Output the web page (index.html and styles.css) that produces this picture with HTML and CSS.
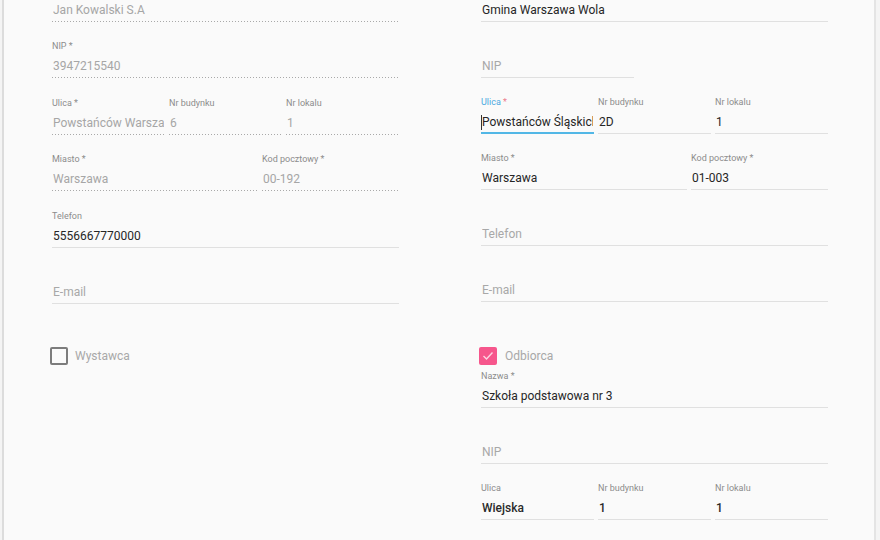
FILE: index.html
```html
<!DOCTYPE html>
<html lang="pl">
<head>
<meta charset="utf-8">
<title>Dane kontrahentów</title>
<link rel="stylesheet" href="styles.css">
</head>
<body>
<div class="card">
  <div class="form">
    <div class="col col-left">
      <div class="field dis"><span class="lbl"></span><input class="inp" disabled value="Jan Kowalski S.A"></div>
      <div class="field dis"><span class="lbl">NIP *</span><input class="inp" disabled value="3947215540"></div>
      <div class="row addr">
        <div class="field dis"><span class="lbl">Ulica *</span><input class="inp" disabled value="Powstańców Warszawy"></div>
        <div class="field dis"><span class="lbl">Nr budynku</span><input class="inp" disabled value="6"></div>
        <div class="field dis"><span class="lbl">Nr lokalu</span><input class="inp" disabled value="1"></div>
      </div>
      <div class="row city">
        <div class="field dis"><span class="lbl">Miasto *</span><input class="inp" disabled value="Warszawa"></div>
        <div class="field dis"><span class="lbl">Kod pocztowy *</span><input class="inp" disabled value="00-192"></div>
      </div>
      <div class="field"><span class="lbl">Telefon</span><input class="inp" value="5556667770000"></div>
      <div class="field"><span class="lbl"></span><input class="inp" placeholder="E-mail"></div>
      <label class="check"><span class="box"></span><span class="check-text">Wystawca</span></label>
    </div>

    <div class="col col-right">
      <div class="field"><span class="lbl"></span><input class="inp" value="Gmina Warszawa Wola"></div>
      <div class="field short"><span class="lbl"></span><input class="inp" placeholder="NIP"></div>
      <div class="row addr">
        <div class="field focus">
          <span class="lbl">Ulica <span class="req">*</span></span>
          <div class="inp-wrap"><span class="caret"></span><input class="inp" value="Powstańców Śląskich"></div>
        </div>
        <div class="field"><span class="lbl">Nr budynku</span><input class="inp" value="2D"></div>
        <div class="field"><span class="lbl">Nr lokalu</span><input class="inp" value="1"></div>
      </div>
      <div class="row city">
        <div class="field"><span class="lbl">Miasto *</span><input class="inp" value="Warszawa"></div>
        <div class="field"><span class="lbl">Kod pocztowy *</span><input class="inp" value="01-003"></div>
      </div>
      <div class="field"><span class="lbl"></span><input class="inp" placeholder="Telefon"></div>
      <div class="field"><span class="lbl"></span><input class="inp" placeholder="E-mail"></div>
      <label class="check">
        <span class="box on">
          <svg width="18" height="18" viewBox="0 0 18 18"><polyline points="4.5,9 7.5,12 13.5,5.5" fill="none" stroke="#fff" stroke-width="1.4" opacity="0.75"/></svg>
        </span>
        <span class="check-text">Odbiorca</span>
      </label>
      <div class="field tight"><span class="lbl">Nazwa *</span><input class="inp" value="Szkoła podstawowa nr 3"></div>
      <div class="field"><span class="lbl"></span><input class="inp" placeholder="NIP"></div>
      <div class="row addr strong">
        <div class="field"><span class="lbl">Ulica</span><input class="inp" value="Wiejska"></div>
        <div class="field"><span class="lbl">Nr budynku</span><input class="inp" value="1"></div>
        <div class="field"><span class="lbl">Nr lokalu</span><input class="inp" value="1"></div>
      </div>
    </div>
  </div>
</div>
</body>
</html>
```

FILE: styles.css
```css
*{ margin:0; padding:0; box-sizing:border-box; }
html,body{ height:100%; overflow:hidden; }
body{
  background:#f4f4f4;
  font-family:Roboto, "Liberation Sans", sans-serif;
  color:#222;
}

.card{
  margin-left:2px;
  width:874px;
  height:100%;
  overflow:hidden;
  background:#fafafa;
  border-left:2px solid #dcdcdc;
  border-right:2px solid #e4e4e4;
  padding:0 46px 0 48px;
}

/* page is scrolled a little: first row's label sits above the fold */
.form{
  display:grid;
  grid-template-columns:347px 347px;
  column-gap:82px;
  margin-top:-35px;
  align-items:start;
}
.col-right{ padding-top:1px; }

/* one input with its floating label */
.field{
  display:flex;
  flex-direction:column;
  padding-top:18px;
  padding-bottom:2px;
  border-bottom:1px solid #e0e0e0;
  min-width:0;
}
.col-left .field{ padding-top:18.5px; }
.lbl{
  display:block;
  height:12px;
  line-height:12px;
  margin-bottom:5px;
  font-size:9px;
  color:#8c8c8c;
  white-space:nowrap;
}
.inp{
  display:block;
  width:100%;
  height:18px;
  line-height:18px;
  padding:0 1px;
  border:0;
  outline:none;
  background:transparent;
  font-family:inherit;
  font-size:12px;
  color:#262626;
}
.inp::placeholder{ color:#a8a8a8; opacity:1; }
.inp:disabled{ color:#a6a6a6; }

.field.dis{
  border-bottom-color:transparent;
  background-image:linear-gradient(to right, #a9a9a9 0, #a9a9a9 1px, transparent 1px);
  background-size:3px 1px;
  background-repeat:repeat-x;
  background-origin:border-box;
  background-position:left bottom;
}

.field.short{ width:153px; }
.field.tight{ padding-top:5px; }

.field.focus{
  border-bottom:2px solid #52b7e6;
  padding-bottom:1px;
}
.field.focus .lbl{ color:#4aa9df; }
.req{ color:#ec7a8c; }
.inp-wrap{ display:flex; align-items:center; }
.caret{ flex:none; width:1px; height:15px; background:#333; }
.inp-wrap .inp{ padding-left:0; }

.row{ display:grid; column-gap:4px; }
.row.addr{ grid-template-columns:repeat(3, 1fr); }
.row.city{ grid-template-columns:206px 137px; }
.row .field{ padding-top:18px; }
.col-left .row .field{ padding-top:18.5px; }
.strong .inp{ font-weight:500; color:#2a2a2a; }

.check{
  display:flex;
  align-items:center;
  gap:7px;
  height:18px;
  margin:43px 0 0 -2px;
}
.col-right .check{ margin-top:45px; }
.box{
  flex:none;
  width:18px;
  height:18px;
  border:2px solid #7c7c7c;
  border-radius:2px;
}
.box.on{
  background:#f6568c;
  border:0;
  display:flex;
}
.box.on + .check-text{ margin-left:1px; }
.check-text{
  font-size:12px;
  color:#a8a8a8;
}
```
